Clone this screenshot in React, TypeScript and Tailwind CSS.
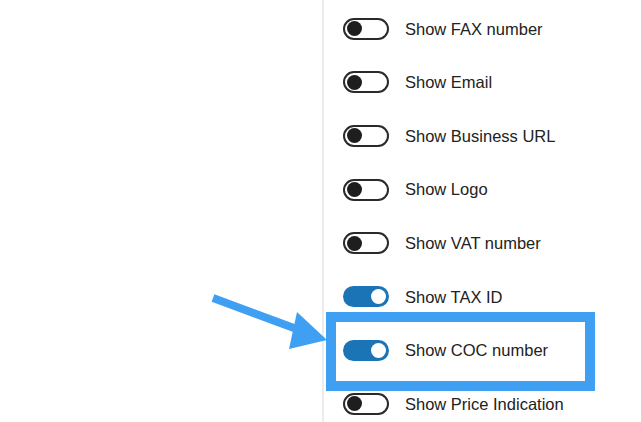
const rows = [
  { label: "Show FAX number", on: false },
  { label: "Show Email", on: false },
  { label: "Show Business URL", on: false },
  { label: "Show Logo", on: false },
  { label: "Show VAT number", on: false },
  { label: "Show TAX ID", on: true },
  { label: "Show COC number", on: true },
  { label: "Show Price Indication", on: false },
];

function Toggle({ on }: { on: boolean }) {
  if (on) {
    return (
      <span className="flex h-[21px] w-[46px] shrink-0 items-center justify-end rounded-full bg-[#1b74b6] pr-[3px]">
        <span className="h-[15px] w-[15px] rounded-full bg-white" />
      </span>
    );
  }
  return (
    <span className="flex h-[22px] w-[46px] shrink-0 items-center rounded-full border-2 border-[#2a2a2a] bg-white pl-[2px]">
      <span className="h-[15px] w-[15px] rounded-full bg-[#1e1e1e]" />
    </span>
  );
}

export default function App() {
  return (
    <div
      className="relative flex h-[422px] w-[641px] overflow-hidden bg-white text-[#222]"
      style={{ fontFamily: '"Liberation Sans", Arial, sans-serif' }}
    >
      <div className="w-[322px] shrink-0" />
      <div className="flex flex-1 flex-col border-l-2 border-[#ececec] pl-[19px] pt-[2px]">
        {rows.map((row) => (
          <label key={row.label} className="flex h-[53.6px] shrink-0 items-center gap-[16px]">
            <Toggle on={row.on} />
            <span className="text-[16.5px] leading-none">{row.label}</span>
          </label>
        ))}
      </div>

      <div className="absolute left-[326px] top-[312px] h-[79px] w-[269px] border-[10px] border-[#3fa0f3]" />

      <svg className="absolute left-0 top-0" width="641" height="422" viewBox="0 0 641 422">
        <line x1="213" y1="298" x2="302" y2="331" stroke="#3fa0f3" strokeWidth="8" />
        <polygon points="327,340 297,312 289,349" fill="#3fa0f3" />
      </svg>
    </div>
  );
}
